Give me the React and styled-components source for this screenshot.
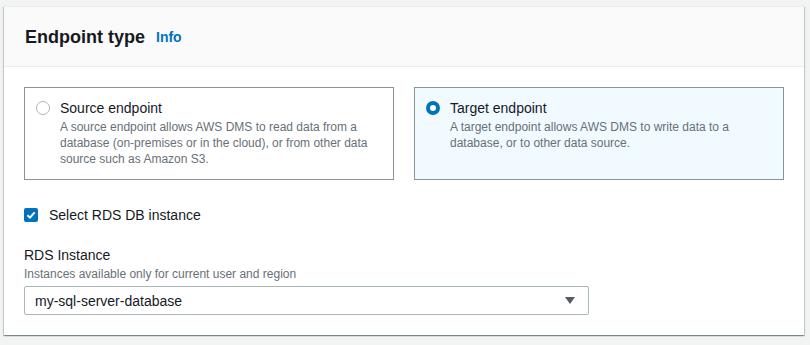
import React, { useState } from 'react';
import styled, { createGlobalStyle } from 'styled-components';

const GlobalStyle = createGlobalStyle`
  html, body {
    margin: 0;
    padding: 0;
    background: #f2f3f3;
    font-family: "Liberation Sans", Arial, sans-serif;
    color: #16191f;
  }
`;

const Page = styled.div`
  padding: 6px 6px 10px 4px;
`;

const Panel = styled.section`
  background: #ffffff;
  border-top: 1px solid #eaeded;
  box-shadow: 0 1px 1px 0 rgba(0, 28, 36, 0.3), 1px 1px 1px 0 rgba(0, 28, 36, 0.15),
    -1px 1px 1px 0 rgba(0, 28, 36, 0.15);
`;

const Header = styled.header`
  height: 59px;
  display: flex;
  align-items: center;
  gap: 11px;
  padding: 0 21px;
  background: #fafafa;
  border-bottom: 1px solid #eaeded;
`;

const Title = styled.h2`
  margin: 0;
  font-size: 18px;
  font-weight: 700;
  line-height: 22px;
  color: #16191f;
`;

const InfoLink = styled.a`
  font-size: 14px;
  font-weight: 700;
  color: #0073bb;
  text-decoration: none;
  line-height: 22px;
  margin-top: 1px;
`;

const Body = styled.div`
  padding: 20px 20px 20px;
`;

const Tiles = styled.div`
  display: grid;
  grid-template-columns: 1fr 1fr;
  gap: 20px;
`;

const Tile = styled.label`
  display: flex;
  gap: 10px;
  min-height: 92px;
  box-sizing: border-box;
  padding: 9px 12px 12px 11px;
  border: 1px solid #879596;
  background: ${(p) => (p.$selected ? '#f1faff' : '#ffffff')};
  cursor: pointer;
`;

const Radio = styled.span`
  flex: none;
  width: 14px;
  height: 14px;
  margin-top: 4px;
  border-radius: 50%;
  box-sizing: border-box;
  background: #ffffff;
  border: ${(p) => (p.$checked ? '4px solid #0073bb' : '1px solid #aab7b8')};
`;

const TileText = styled.div`
  display: flex;
  flex-direction: column;
`;

const TileLabel = styled.span`
  font-size: 14px;
  line-height: 22px;
  color: #16191f;
`;

const Description = styled.span`
  font-size: 12px;
  line-height: 16px;
  color: #687078;
`;

const CheckRow = styled.label`
  display: flex;
  align-items: center;
  gap: 11px;
  margin-top: 24px;
  font-size: 14px;
  line-height: 22px;
  cursor: pointer;
`;

const Checkbox = styled.span`
  width: 14px;
  height: 14px;
  border-radius: 2px;
  background: #0073bb;
  display: flex;
  align-items: center;
  justify-content: center;
`;

const Field = styled.div`
  margin-top: 18px;
  display: flex;
  flex-direction: column;
`;

const FieldLabel = styled.span`
  font-size: 14px;
  line-height: 22px;
  color: #16191f;
`;

const FieldHint = styled.span`
  font-size: 12px;
  line-height: 16px;
  color: #687078;
`;

const Select = styled.div`
  margin-top: 4px;
  width: 565px;
  height: 29px;
  box-sizing: border-box;
  border: 1px solid #aab7b8;
  border-radius: 2px;
  display: flex;
  align-items: center;
  justify-content: space-between;
  padding: 0 13px 0 10px;
  font-size: 14px;
  color: #16191f;
`;

const options = [
  {
    id: 'source',
    label: 'Source endpoint',
    description:
      'A source endpoint allows AWS DMS to read data from a database (on-premises or in the cloud), or from other data source such as Amazon S3.',
  },
  {
    id: 'target',
    label: 'Target endpoint',
    description: 'A target endpoint allows AWS DMS to write data to a database, or to other data source.',
  },
];

export default function App() {
  const [selected, setSelected] = useState('target');

  return (
    <Page>
      <GlobalStyle />
      <Panel>
        <Header>
          <Title>Endpoint type</Title>
          <InfoLink href="#">Info</InfoLink>
        </Header>
        <Body>
          <Tiles>
            {options.map((o) => (
              <Tile key={o.id} $selected={selected === o.id} onClick={() => setSelected(o.id)}>
                <Radio $checked={selected === o.id} />
                <TileText>
                  <TileLabel>{o.label}</TileLabel>
                  <Description>{o.description}</Description>
                </TileText>
              </Tile>
            ))}
          </Tiles>
          <CheckRow>
            <Checkbox>
              <svg width="10" height="10" viewBox="0 0 10 10">
                <path d="M1.5 5.2 L4 7.6 L8.6 2.4" fill="none" stroke="#fff" strokeWidth="2" />
              </svg>
            </Checkbox>
            Select RDS DB instance
          </CheckRow>
          <Field>
            <FieldLabel>RDS Instance</FieldLabel>
            <FieldHint>Instances available only for current user and region</FieldHint>
            <Select>
              <span>my-sql-server-database</span>
              <svg width="10" height="7" viewBox="0 0 10 7">
                <path d="M0 0 H10 L5 7 Z" fill="#545b64" />
              </svg>
            </Select>
          </Field>
        </Body>
      </Panel>
    </Page>
  );
}
